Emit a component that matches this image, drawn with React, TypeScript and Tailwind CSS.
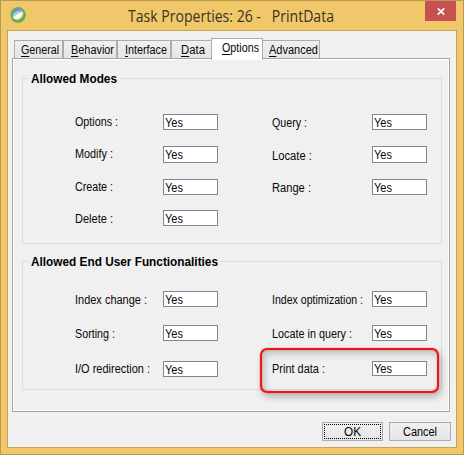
import { useLayoutEffect, useRef, useState, type ReactNode } from "react";

/* A single line of text condensed or widened to a fixed advance width. */
function Fit({ w, children, className = "" }: { w: number; children: ReactNode; className?: string }) {
  const ref = useRef<HTMLSpanElement>(null);
  const [scale, setScale] = useState(1);
  useLayoutEffect(() => {
    if (ref.current) setScale(w / ref.current.getBoundingClientRect().width);
  }, [w]);
  return (
    <span className={`block h-4 shrink-0 ${className}`} style={{ width: w }}>
      <span className="block w-max origin-left whitespace-pre" style={{ transform: `scaleX(${scale})` }}>
        <span ref={ref}>{children}</span>
      </span>
    </span>
  );
}

function Tab({ name, w, className }: { name: string; w: number; className: string }) {
  return (
    <div className={`flex border-[#acacac] ${className}`}>
      <Fit w={w}>
        <span className="underline decoration-1 underline-offset-2">{name[0]}</span>
        {name.slice(1)}
      </Fit>
    </div>
  );
}

type Cell = { label: string; w: number; mt?: string; box?: string; text?: string };

function Field({ label, w, mt = "", box = "h-4", text = "" }: Cell) {
  return (
    <>
      <div>
        <Fit w={w} className={mt}>{label}</Fit>
      </div>
      <div className={`w-[55px] border border-[#82868f] bg-white pl-px ${box}`}>
        <Fit w={18} className={text}>Yes</Fit>
      </div>
    </>
  );
}

function Row({ left, right, className }: { left: Cell; right?: Cell; className: string }) {
  return (
    <div className={`grid grid-cols-[88px_109px_100px_55px] items-start ${className}`}>
      <Field {...left} />
      {right && <Field {...right} />}
    </div>
  );
}

function Group({ title, w, className, children }: { title: string; w: number; className: string; children: ReactNode }) {
  return (
    <section className={`relative ml-[9px] w-[420px] border border-[#dcdcdc] pl-[52px] ${className}`}>
      <h2 className="absolute -top-[8px] left-[5px] bg-[#f0f0f0] px-[3px] font-bold text-black">
        <Fit w={w}>{title}</Fit>
      </h2>
      {children}
    </section>
  );
}

export default function App() {
  return (
    <div className="h-[455px] w-[464px] overflow-hidden border border-[#b9984f] bg-[#f0c869] font-['Liberation_Sans',Arial,sans-serif] text-[12px] leading-4 text-[#080808]">
      <header className="flex h-[29px] items-start">
        <svg className="mt-[6px] ml-[9px] h-4 w-4 shrink-0" viewBox="0 0 16 16">
          <circle cx="8" cy="8" r="7.7" fill="#62a348" />
          <path d="M1.8 4.5A7.6 7.6 0 0 1 12.8 1.8L13.5 5 3 7.5Z" fill="#6d9aa0" />
          <path d="M3 7.5Q5 3.8 12.8 3.6L12 6.2Q8 6.2 3.2 10Z" fill="#a9cbd6" />
          <path d="M3 10.5Q6 7 12.8 5Q14 8 11 11.3Q8 13.4 4.5 12.2Z" fill="#fff" />
          <path d="M13 4Q15.4 8 12 11.8Q8.5 15 4 12.8Q8.5 13 11 10.3Q13.2 7.8 13 4Z" fill="#8cc763" />
          <path d="M2.6 12A6.7 6.7 0 0 1 2.2 4.8" fill="none" stroke="#8fc56a" />
        </svg>
        <h1 className="mt-[6px] ml-[102px] font-['Open_Sans','Noto_Sans',sans-serif] text-[16px] leading-[18px] text-[#3a3226]">
          <Fit w={206}>{"Task Properties: 26 -   PrintData"}</Fit>
        </h1>
        <button className="ml-[91px] flex h-5 w-[31px] shrink-0 items-center justify-center bg-[#c75050] pt-px" aria-label="Close">
          <svg className="h-[7px] w-2" viewBox="0 0 8 7">
            <path d="M.8.4 7.2 6.6M7.2.4.8 6.6" stroke="#fff" strokeWidth="1.7" />
          </svg>
        </button>
      </header>

      <main className="ml-[6px] h-[418px] w-[450px] border border-[#c5a458] bg-[#f0f0f0] pl-1">
        <nav className="relative z-10 flex h-[27px] items-end pl-[2px]">
          <Tab name="General" w={38} className="h-[18px] w-[49px] border-x border-t bg-gradient-to-b from-[#f0f0f0] to-[#e5e5e5] pt-px pl-[6px]" />
          <Tab name="Behavior" w={43} className="h-[18px] w-[54px] border-x border-t bg-gradient-to-b from-[#f0f0f0] to-[#e5e5e5] pt-px pl-[7px]" />
          <Tab name="Interface" w={42} className="h-[18px] w-[54px] border-x border-t bg-gradient-to-b from-[#f0f0f0] to-[#e5e5e5] pt-px pl-[7px]" />
          <Tab name="Data" w={24} className="h-[18px] w-[40px] border-t border-l bg-gradient-to-b from-[#f0f0f0] to-[#e5e5e5] pt-px pl-[9px]" />
          <Tab name="Options" w={37} className="-mb-[2px] h-[22px] w-[52px] border-x border-t bg-white pt-px pl-[10px]" />
          <Tab name="Advanced" w={49} className="h-[18px] w-[57px] border-t border-r bg-gradient-to-b from-[#f0f0f0] to-[#e5e5e5] pt-px pl-[6px]" />
        </nav>

        <div className="relative h-[354px] w-[438px] border border-[#a5a5a5] bg-[#f0f0f0] pt-[19px] shadow-[inset_0_0_0_1px_#fff]">
          <Group title="Allowed Modes" w={86} className="h-[166px] pt-[35px]">
            <Row className="h-8" left={{ label: "Options :", w: 43 }} right={{ label: "Query :", w: 35, mt: "mt-px" }} />
            <Row className="h-[33px]" left={{ label: "Modify :", w: 38, box: "h-[17px]" }} right={{ label: "Locate :", w: 40, mt: "mt-[2px]", box: "h-[17px]" }} />
            <Row className="h-[31px]" left={{ label: "Create :", w: 38 }} right={{ label: "Range :", w: 39, mt: "mt-px" }} />
            <Row className="h-4" left={{ label: "Delete :", w: 38, mt: "mt-px" }} />
          </Group>
          <Group title="Allowed End User Functionalities" w={187} className="mt-[17px] h-[129px] pt-[29px]">
            <Row className="h-[34px]" left={{ label: "Index change :", w: 72, mt: "mt-px" }} right={{ label: "Index optimization :", w: 91, mt: "mt-px" }} />
            <Row className="h-9" left={{ label: "Sorting :", w: 40, mt: "mt-px" }} right={{ label: "Locate in query :", w: 80, mt: "mt-px" }} />
            <Row className="h-4" left={{ label: "I/O redirection :", w: 75 }} right={{ label: "Print data :", w: 53, box: "h-[15px]", text: "-mt-px" }} />
          </Group>
          <div className="absolute top-[289px] left-[247px] h-[45px] w-[179px] rounded-[7px] border-[2px] border-[#f01414] shadow-[0_0_1px_#e02020,2px_4px_7px_rgba(0,0,0,0.25),inset_0_0_1px_#e02020,inset_3px_4px_7px_rgba(0,0,0,0.2)]" />
        </div>

        <footer className="mt-[10px] ml-[310px] flex gap-[6px] text-black">
          <button className="h-[19px] w-[61px] border border-[#acacac] bg-gradient-to-b from-[#f0f0f0] to-[#e5e5e5] p-px">
            <span className="flex h-full justify-center border border-dotted border-black">
              <Fit w={17} className="-mt-px">OK</Fit>
            </span>
          </button>
          <button className="flex h-[19px] w-[62px] justify-center border border-[#acacac] bg-gradient-to-b from-[#f0f0f0] to-[#e5e5e5] pt-px">
            <Fit w={34}>Cancel</Fit>
          </button>
        </footer>
      </main>
    </div>
  );
}
